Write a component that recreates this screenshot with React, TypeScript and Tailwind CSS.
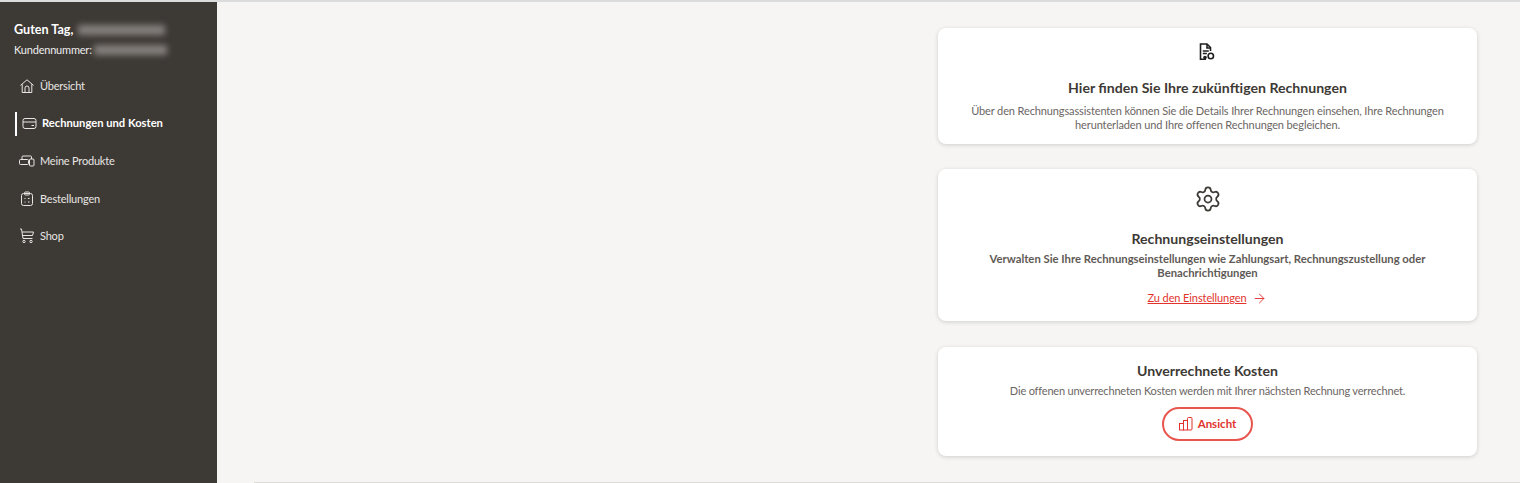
import { ArrowRight, Settings } from 'lucide-react'
import type { ReactNode } from 'react'

function HomeIcon() {
  return (
    <svg width="16" height="16" viewBox="0 0 16 16" fill="none" stroke="currentColor" strokeWidth="1">
      <path d="M1.500 7.400 8 1.800l6.500 5.600M3.200 6.200v8.300h9.600V6.200" />
      <path d="M6 14.500V10a2 2 0 0 1 4 0v4.500" />
    </svg>
  )
}

function CardIcon() {
  return (
    <svg width="15" height="15" viewBox="0 0 15 15" fill="none" stroke="currentColor" strokeWidth="1">
      <rect x="1" y="2.500" width="13" height="10" rx="2" />
      <path d="M1 6h13M9.500 9.500H12" />
    </svg>
  )
}

function DevicesIcon() {
  return (
    <svg width="16" height="16" viewBox="0 0 16 16" fill="none" stroke="currentColor" strokeWidth="1">
      <path d="M3 6.500V4a1 1 0 0 1 1-1h7.500a1 1 0 0 1 1 1v2" />
      <rect x="0.500" y="6.500" width="9" height="5" rx="1" />
      <rect x="10.500" y="6" width="4.500" height="7" rx="1" />
    </svg>
  )
}

function ClipboardIcon() {
  return (
    <svg width="16" height="16" viewBox="0 0 16 16" fill="none" stroke="currentColor" strokeWidth="1">
      <rect x="2.500" y="2.500" width="11" height="12" rx="2" />
      <rect x="5.500" y="1" width="5" height="3" rx="1" />
      <path d="M5.500 7.500h1M9 7.500h1.500M5.500 11h1M9 11h1.500" />
    </svg>
  )
}

function CartIcon() {
  return (
    <svg width="16" height="16" viewBox="0 0 16 16" fill="none" stroke="currentColor" strokeWidth="1">
      <path d="M1 1h1.500l1.500 9.500h9.500M3 4h11.500l-1 3.500H3.600" />
      <circle cx="5" cy="13.500" r="1.200" />
      <circle cx="12" cy="13.500" r="1.200" />
    </svg>
  )
}

function InvoiceIcon() {
  return (
    <svg width="16" height="18" viewBox="0 0 16 18" fill="none" stroke="#1f1f1f" strokeWidth="1.600" className="mr-[1px]">
      <path d="M7 16.200H1.500V1h6.500l3.500 3.500V8" />
      <path d="M8 1v4h3.500" />
      <path d="M3.800 8h6M3.800 10.500h4" />
      <circle cx="6" cy="14.500" r="1.800" fill="#1f1f1f" stroke="none" />
      <circle cx="11.800" cy="13" r="2.700" />
    </svg>
  )
}

function BarsIcon() {
  return (
    <svg width="14" height="14" viewBox="0 0 14 14" fill="none" stroke="currentColor" strokeWidth="1">
      <rect x="0.500" y="6.500" width="4" height="6.500" />
      <rect x="4.500" y="3.500" width="4" height="9.500" />
      <rect x="8.500" y="0.500" width="4.500" height="12.500" rx="1" />
    </svg>
  )
}

const navItems = [
  { label: 'Übersicht', icon: <HomeIcon /> },
  { label: 'Rechnungen und Kosten', icon: <CardIcon />, active: true },
  { label: 'Meine Produkte', icon: <DevicesIcon /> },
  { label: 'Bestellungen', icon: <ClipboardIcon /> },
  { label: 'Shop', icon: <CartIcon /> },
]

function Card({ className, children }: { className: string; children: ReactNode }) {
  return (
    <section className={`w-[539px] bg-white rounded-lg shadow-[0_1px_4px_rgba(0,0,0,0.16)] flex flex-col items-center text-center ${className}`}>
      {children}
    </section>
  )
}

export default function App() {
  return (
    <div className="w-[1520px] h-[483px] overflow-hidden flex flex-col bg-[#f6f5f3] font-['Lato',sans-serif]">
      <div className="h-[2px] shrink-0 bg-[#dcdcdc]" />
      <div className="flex-1 flex min-h-0">
        {/* Sidebar */}
        <aside className="w-[217px] shrink-0 bg-[#3d3935] text-white">
          <div className="pl-[14px] pt-[20px]">
            <div className="flex items-center h-[16px] text-[12.600px] font-bold leading-4">
              Guten Tag,
              <span className="ml-[5px] w-[87px] h-[10px] bg-[#85817e] blur-[3px]" />
            </div>
            <div className="flex items-center h-[16px] mt-[4px] text-[11px] tracking-[-0.2px] leading-4 text-[#eeeeee]">
              Kundennummer:
              <span className="ml-[2px] w-[73px] h-[10px] bg-[#85817e] blur-[3px]" />
            </div>
          </div>
          <nav className="mt-[9.500px] flex flex-col">
            {navItems.map((item) => (
              <div key={item.label} className="h-[37.500px] flex items-center">
                <span className={`w-[2px] h-[24px] mr-[5px] ml-[15px] ${item.active ? 'bg-white' : ''}`} />
                <span className={`flex items-center text-[#e8e6e4] ${item.active ? 'gap-[5px]' : 'ml-[-3px] gap-[5px]'}`}>
                  {item.icon}
                  <span className={item.active ? 'text-[11.200px] font-bold text-white' : 'text-[11px] tracking-[-0.2px]'}>{item.label}</span>
                </span>
              </div>
            ))}
          </nav>
        </aside>

        {/* Main */}
        <main className="flex-1 flex flex-col">
          <div className="flex-1 min-h-0 flex flex-col items-end pr-[43px] pt-[26px]">
            <Card className="h-[116px] pt-[15px]">
              <InvoiceIcon />
              <h2 className="mt-[17px] text-[14.100px] leading-5 font-bold text-[#3d3935]">Hier finden Sie Ihre zukünftigen Rechnungen</h2>
              <p className="mt-[6px] w-[500px] text-[11px] tracking-[-0.12px] leading-[14px] text-[#6b6663]">
                Über den Rechnungsassistenten können Sie die Details Ihrer Rechnungen einsehen, Ihre Rechnungen herunterladen und Ihre offenen Rechnungen begleichen.
              </p>
            </Card>
            <Card className="h-[152px] mt-[25px] pt-[16px]">
              <Settings size={28} strokeWidth={1.500} className="text-[#3d3935]" />
              <h2 className="mt-[16px] text-[14.100px] leading-5 font-bold text-[#3d3935]">Rechnungseinstellungen</h2>
              <p className="mt-[3px] w-[470px] text-[11.300px] leading-[14px] font-bold text-[#5f5a56]">
                Verwalten Sie Ihre Rechnungseinstellungen wie Zahlungsart, Rechnungszustellung oder Benachrichtigungen
              </p>
              <a className="mt-[10px] flex items-center gap-[6px] text-[11px] tracking-[-0.1px] leading-4 text-[#e2332d]">
                <span className="underline">Zu den Einstellungen</span>
                <ArrowRight size={15} strokeWidth={1.500} />
              </a>
            </Card>
            <Card className="h-[109px] mt-[26px] pt-[14px]">
              <h2 className="text-[14.100px] leading-5 font-bold text-[#3d3935]">Unverrechnete Kosten</h2>
              <p className="mt-[2px] text-[11px] tracking-[-0.18px] leading-[16px] text-[#6b6663]">
                Die offenen unverrechneten Kosten werden mit Ihrer nächsten Rechnung verrechnet.
              </p>
              <button className="mt-[8px] w-[91px] h-[34px] rounded-full border-2 border-[#e8564e] flex items-center justify-center gap-[5px] text-[#e2332d] text-[11.500px] font-bold">
                <BarsIcon />
                Ansicht
              </button>
            </Card>
          </div>
          <div className="ml-[37px] h-[1px] shrink-0 bg-[#dfdbd6]" />
        </main>
      </div>
    </div>
  )
}
